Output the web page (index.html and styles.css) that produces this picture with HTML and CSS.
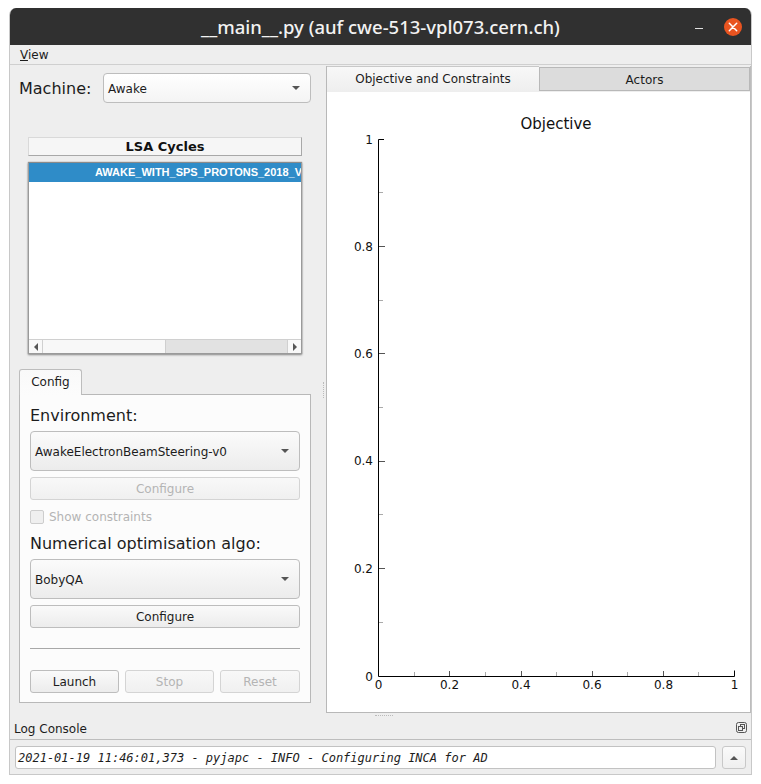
FILE: index.html
```html
<!DOCTYPE html>
<html lang="en">
<head>
<meta charset="utf-8">
<title>__main__.py</title>
<link rel="stylesheet" href="styles.css">
</head>
<body>
<div class="window">
  <header class="titlebar">
    <span class="title">__main__.py (auf cwe-513-vpl073.cern.ch)</span>
    <span class="minimize"></span>
    <span class="close">
      <svg width="24" height="24" viewBox="0 0 24 24"><circle cx="12" cy="12" r="9" fill="#e95420"/><path d="M8.3 8.3l7.4 7.4M15.7 8.3l-7.4 7.4" stroke="#fff" stroke-width="1.5" stroke-linecap="round"/></svg>
    </span>
  </header>
  <nav class="menubar"><span><u>V</u>iew</span></nav>
  <div class="main">
    <section class="left">
      <div class="machine-row">
        <label class="big-label">Machine:</label>
        <div class="combo combo-light"><span>Awake</span><i class="arrow"></i></div>
      </div>
      <div class="list-header">LSA Cycles</div>
      <div class="list">
        <div class="list-body">
          <div class="list-row">AWAKE_WITH_SPS_PROTONS_2018_V</div>
        </div>
        <div class="hscroll">
          <span class="sb-btn"><i class="tri-left"></i></span>
          <span class="sb-handle"></span>
          <span class="sb-track"></span>
          <span class="sb-btn sb-end"><i class="tri-right"></i></span>
        </div>
      </div>
      <div class="tabs"><span class="config-tab">Config</span></div>
      <div class="config-pane">
        <div class="big-label env-label">Environment:</div>
        <div class="combo combo-tall"><span>AwakeElectronBeamSteering-v0</span><i class="arrow"></i></div>
        <button class="btn btn-wide disabled">Configure</button>
        <div class="check-row disabled"><i class="check"></i><span>Show constraints</span></div>
        <div class="big-label algo-label">Numerical optimisation algo:</div>
        <div class="combo combo-tall"><span>BobyQA</span><i class="arrow"></i></div>
        <button class="btn btn-wide">Configure</button>
        <hr class="rule">
        <div class="actions">
          <button class="btn act">Launch</button>
          <button class="btn act disabled">Stop</button>
          <button class="btn act act-last disabled">Reset</button>
        </div>
      </div>
    </section>
    <i class="v-grip"></i>
    <section class="right">
      <div class="plot-tabs">
        <span class="plot-tab active">Objective and Constraints</span>
        <span class="plot-tab">Actors</span>
      </div>
      <div class="plot">
        <svg class="chart" width="423" height="620" viewBox="327 92 423 620">
          <g class="labels">
            <text class="chart-title" x="556" y="129" text-anchor="middle">Objective</text>
            <g text-anchor="end">
              <text x="373" y="144">1</text>
              <text x="373" y="251">0.8</text>
              <text x="373" y="358">0.6</text>
              <text x="373" y="465">0.4</text>
              <text x="373" y="573">0.2</text>
              <text x="373" y="681">0</text>
            </g>
            <g text-anchor="middle">
              <text x="378.5" y="689">0</text>
              <text x="449.5" y="689">0.2</text>
              <text x="521" y="689">0.4</text>
              <text x="592" y="689">0.6</text>
              <text x="663.5" y="689">0.8</text>
              <text x="734.5" y="689">1</text>
            </g>
          </g>
          <path class="minor" d="M379 192.5h4M379 300.5h4M379 407.5h4M379 514.5h4M379 622.5h4M414.5 676v-4M485.5 676v-4M556.5 676v-4M627.5 676v-4M698.5 676v-4"/>
          <path class="major" d="M379 246.5h6M379 353.5h6M379 461.5h6M379 568.5h6M449.5 676v-5M521.5 676v-5M592.5 676v-5M663.5 676v-5"/>
          <path class="axis" d="M384 139.5h-5.5v537h356v-6"/>
        </svg>
      </div>
    </section>
  </div>
  <i class="h-grip"></i>
  <div class="dock-title">
    <span>Log Console</span>
    <svg width="11" height="11" viewBox="0 0 11 11" class="float-icon"><rect x=".5" y=".5" width="10" height="10" rx="2" fill="none" stroke="#555"/><rect x="4.5" y="2.5" width="4" height="4" fill="none" stroke="#555"/><rect x="2.5" y="4.5" width="4" height="4" fill="#eee" stroke="#555"/></svg>
  </div>
  <div class="dock">
    <div class="log-line">2021-01-19 11:46:01,373 - pyjapc - INFO - Configuring INCA for AD</div>
    <button class="log-btn"><i class="tri-up"></i></button>
  </div>
</div>
</body>
</html>
```
FILE: styles.css
```css
* { box-sizing: border-box; }
html, body { margin: 0; background: #fff; }
body { padding: 8px 9px 0 9px; font-family: "DejaVu Sans", sans-serif; color: #1c1c1c; }
i { display: block; }

.window { width: 743px; height: 767px; background: #eeeeee; border: 1px solid #c8c8c8; border-top: 0; border-radius: 7px 7px 0 0; display: flex; flex-direction: column; overflow: hidden; }

.titlebar { height: 37px; flex: none; background: #303030; position: relative; display: flex; align-items: center; justify-content: center; }
.title { font-family: "Noto Sans", sans-serif; font-weight: 500; font-size: 18.5px; color: #f2f2f2; }
.minimize { position: absolute; right: 48px; top: 20px; width: 8px; height: 1px; background: #e0e0e0; }
.close { position: absolute; right: 6px; top: 7px; width: 24px; height: 24px; }

.menubar { height: 20px; flex: none; padding: 3px 10px 0; font-size: 12px; line-height: 14px; border-bottom: 1px solid #cfcfcf; }

.main { flex: 1; display: flex; min-height: 0; }
.left { width: 316px; flex: none; padding: 8px 0 0 9px; }
.v-grip { width: 1px; height: 16px; border-left: 1px dotted #bbb; margin: 317px 2px 0 -3px; flex: none; }

.machine-row { display: flex; align-items: center; width: 292px; height: 30px; }
.big-label { font-size: 16px; line-height: 22px; }
.machine-row .big-label { width: 84px; flex: none; padding-top: 1px; line-height: 23px; }

.combo { display: flex; align-items: center; justify-content: space-between; border: 1px solid #bdbdbd; border-radius: 4px; font-size: 12px; padding: 1px 10px 0 4px; background: linear-gradient(#fbfbfb, #ececec); }
.combo-light { height: 30px; flex: 1; background: linear-gradient(#ffffff, #f4f4f4); }
.combo-tall { height: 40px; }
.arrow { width: 0; height: 0; margin-top: -1px; border-left: 4.5px solid transparent; border-right: 4.5px solid transparent; border-top: 4px solid #555; }

.list-header { width: 274px; height: 19px; margin: 34px 0 0 9px; border: 1px solid #d9d9d9; border-bottom: 1px solid #a8a8a8; border-right-color: #a8a8a8; background: #f6f6f6; font-size: 13px; line-height: 17px; font-weight: 700; text-align: center; color: #111; }

.list { width: 274px; height: 192px; margin: 6px 0 0 9px; border: 1px solid #9a9a9a; border-top-color: #8a8a8a; background: #fff; box-shadow: 0 1px 2px rgba(0,0,0,.4), 0 0 1px rgba(0,0,0,.35); display: flex; flex-direction: column; overflow: hidden; }
.list-body { flex: 1; min-height: 0; overflow: hidden; }
.list-row { height: 19px; background: #2f8cc8; color: #fff; font-family: "Liberation Sans", sans-serif; font-weight: 700; font-size: 11px; line-height: 18px; padding-left: 66px; white-space: nowrap; overflow: hidden; }
.hscroll { height: 14px; flex: none; display: flex; border-top: 1px solid #d0d0d0; background: #f8f8f8; }
.sb-btn { width: 14px; flex: none; border-right: 1px solid #d0d0d0; display: flex; align-items: center; justify-content: center; }
.sb-end { border-right: 0; border-left: 1px solid #d0d0d0; }
.sb-handle { width: 122px; flex: none; background: #f8f8f8; }
.sb-track { flex: 1; background: #e2e2e2; border-left: 1px solid #cfcfcf; }
.tri-left { border-top: 4px solid transparent; border-bottom: 4px solid transparent; border-right: 4px solid #555; }
.tri-right { border-top: 4px solid transparent; border-bottom: 4px solid transparent; border-left: 4px solid #555; }

.tabs { margin-top: 15px; height: 25px; display: flex; position: relative; z-index: 1; }
.config-tab { width: 63px; height: 26px; border: 1px solid #bdbdbd; border-bottom: 0; border-radius: 3px 3px 0 0; background: linear-gradient(#f9f9f9, #fcfcfc); text-align: center; font-size: 12px; line-height: 24px; }

.config-pane { width: 292px; height: 309px; border: 1px solid #b8b8b8; background: #fcfcfc; padding: 9px 10px 0; display: flex; flex-direction: column; }
.env-label { height: 27px; line-height: 24px; }
.btn { font-family: inherit; font-size: 12px; color: #1c1c1c; height: 23px; padding: 0; border: 1px solid #bdbdbd; border-radius: 3px; background: linear-gradient(#fafafa, #ececec); }
.btn.disabled { color: #b4b4b4; border-color: #d4d4d4; background: linear-gradient(#f8f8f8, #f0f0f0); }
.btn-wide { width: 100%; margin-top: 6px; flex: none; }
.check-row { display: flex; align-items: center; height: 15px; margin-top: 9px; font-size: 12px; gap: 5px; }
.check-row.disabled { color: #b4b4b4; }
.check { width: 14px; height: 14px; border: 1px solid #cdcdcd; border-radius: 2px; background: #efefef; }
.algo-label { height: 26px; margin-top: 7px; line-height: 26px; margin-bottom: 2px; }
.rule { width: 100%; height: 1px; border: 0; margin: 20px 0 0; background: #a8a8a8; flex: none; }
.actions { display: flex; gap: 6px; margin-top: 21px; }
.act { width: 89px; flex: none; }
.act-last { width: 80px; }

.right { width: 425px; flex: none; margin-top: 1px; border: 1px solid #b8b8b8; border-top: 0; border-right-color: #bdbdbd; display: flex; flex-direction: column; background: #fff; height: 647px; }
.plot-tabs { display: flex; height: 26px; flex: none; background: #eee; }
.plot-tab { flex: 1; margin-top: 1px; height: 24px; background: #dcdcdc; border: 1px solid #b8b8b8; text-align: center; font-size: 12px; line-height: 24px; }
.plot-tab.active { flex: none; width: 212px; margin-top: 0; height: 26px; background: linear-gradient(#f8f8f8, #eeeeee); border: 0; border-top: 1px solid #c8c8c8; }
.plot { flex: 1; min-height: 0; background: #fff; }
.chart { display: block; }
.labels text { font-family: "DejaVu Sans", sans-serif; font-size: 12px; fill: #111; }
.labels .chart-title { font-size: 15px; }
.axis { fill: none; stroke: #000; stroke-width: 1; }
.major { stroke: #555; stroke-width: 1; }
.minor { stroke: #aaa; stroke-width: 1; }

.h-grip { height: 1px; width: 18px; margin: 2px 0 0 365px; border-top: 1px dotted #bbb; flex: none; }
.dock-title { height: 24px; flex: none; display: flex; justify-content: space-between; align-items: center; padding: 3px 2px 0 4px; font-size: 12px; border-bottom: 1px solid #bdbdbd; }
.float-icon { flex: none; margin: -3px 2px 0 0; }
.dock { height: 34px; flex: none; display: flex; gap: 6px; padding: 6px 4px 0 5px; }
.log-line { width: 701px; height: 23px; background: #fff; border: 1px solid #c2c2c2; border-radius: 3px; font-family: "DejaVu Sans Mono", monospace; font-style: italic; font-size: 12px; line-height: 22px; padding-left: 2px; white-space: nowrap; overflow: hidden; }
.log-btn { width: 24px; height: 23px; padding: 0; border: 1px solid #c8c8c8; border-radius: 3px; background: linear-gradient(#fafafa, #efefef); display: flex; align-items: center; justify-content: center; }
.tri-up { border-left: 4px solid transparent; border-right: 4px solid transparent; border-bottom: 4px solid #555; }
```
